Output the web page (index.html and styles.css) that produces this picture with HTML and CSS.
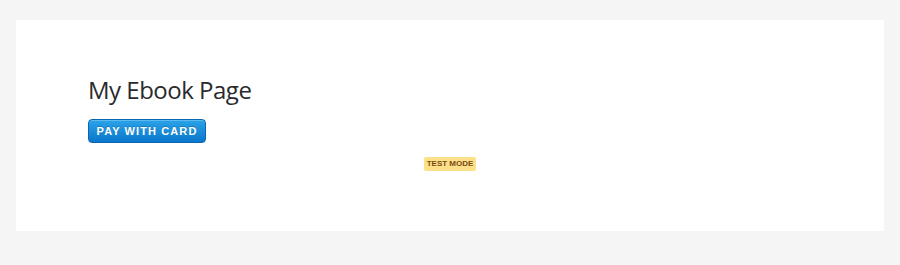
FILE: index.html
```html
<!DOCTYPE html>
<html lang="en">
<head>
  <meta charset="UTF-8">
  <meta name="viewport" content="width=device-width, initial-scale=1.0">
  <title>My Ebook Page</title>
  <link rel="stylesheet" href="styles.css">
</head>
<body>
  <div class="page">
    <h1 class="title">My Ebook Page</h1>
    <button class="pay-button">Pay with Card</button>
    <div class="test-mode">
      <span class="badge">TEST MODE</span>
    </div>
  </div>
</body>
</html>
```

FILE: styles.css
```css
body {
  font-family: "Liberation Sans", Arial, sans-serif;
  background-color: #f5f5f5;
  margin: 0;
  padding: 20px 16px 34px;
}
.page {
  background: #ffffff;
  height: 211px;
  box-sizing: border-box;
  padding: 54px 72px 0;
}
.title {
  font-family: "Open Sans", sans-serif;
  font-weight: 400;
  font-size: 24px;
  line-height: 32px;
  color: #2a2a2e;
  margin: 0 0 13px;
  letter-spacing: -0.5px;
}
.pay-button {
  display: block;
  height: 24px;
  width: 118px;
  padding: 0;
  font-family: "Liberation Sans", Arial, sans-serif;
  font-size: 11px;
  font-weight: bold;
  letter-spacing: 1.1px;
  text-transform: uppercase;
  color: #ffffff;
  background: linear-gradient(#2aa3e8, #0b77cb);
  border: 1px solid #0a66b2;
  border-radius: 4px;
  box-shadow: inset 0 1px 0 rgba(255, 255, 255, 0.25);
  text-shadow: 0 -1px 0 rgba(0, 0, 0, 0.2);
  cursor: pointer;
}
.test-mode {
  display: flex;
  justify-content: center;
  margin-top: 14px;
}
.badge {
  display: inline-block;
  background: #fde08a;
  color: #7b4a14;
  font-size: 8px;
  font-weight: bold;
  line-height: 14px;
  padding: 0 3px;
  border-radius: 2px;
}
```
